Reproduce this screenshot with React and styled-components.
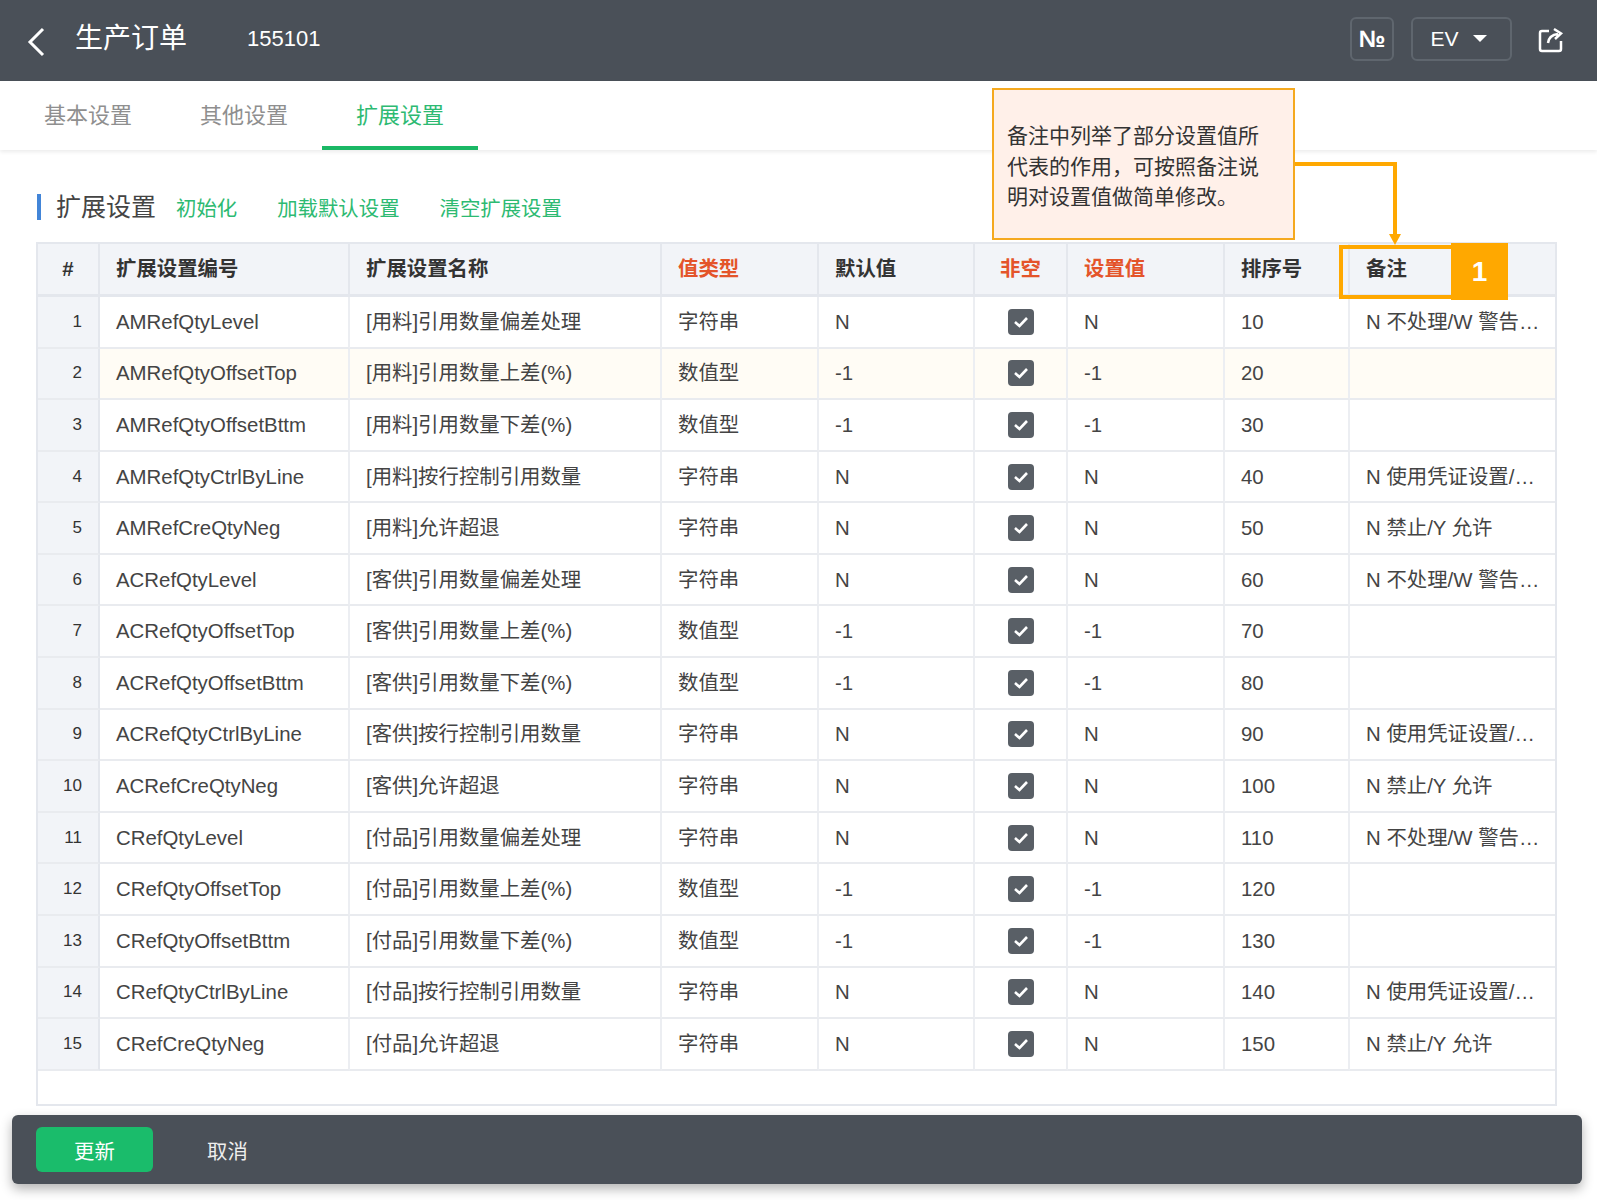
import styled, { createGlobalStyle } from 'styled-components'

const GlobalStyle = createGlobalStyle`
    html, body {
        margin: 0;
        padding: 0;
        background: #fff;
    }
    body {
        font-family: "Liberation Sans", "Noto Sans CJK SC", sans-serif;
        color: #333;
    }
`

const Page = styled.div`
    position: relative;
    width: 1597px;
    height: 1200px;
    overflow: hidden;
`

const Header = styled.header`
    display: flex;
    align-items: center;
    height: 81px;
    padding: 0 33px 0 25px;
    background: #4a5058;
    color: #fff;
    box-sizing: border-box;
`

const BackIcon = styled.svg`
    width: 22px;
    height: 32px;
    margin-top: 3px;
    margin-right: 28px;
`

const Title = styled.h1`
    margin: 0 60px 3px 0;
    font-size: 28px;
    font-weight: 400;
    line-height: 36px;
`

const OrderNo = styled.span`
    margin-bottom: 3px;
    font-size: 22px;
`

const HeaderRight = styled.div`
    display: flex;
    align-items: center;
    margin-left: auto;
    margin-bottom: 4px;
`

const HeaderBox = styled.div`
    display: flex;
    align-items: center;
    justify-content: center;
    gap: 14px;
    width: ${props => props.$w}px;
    height: 44px;
    margin-right: ${props => props.$mr}px;
    padding-right: ${props => props.$pr || 0}px;
    border: 2px solid #5f666e;
    border-radius: 6px;
    box-sizing: border-box;
    font-size: ${props => props.$size}px;
    font-weight: ${props => props.$bold ? 700 : 400};
`

const Caret = styled.span`
    width: 0;
    height: 0;
    border-left: 7px solid transparent;
    border-right: 7px solid transparent;
    border-top: 7px solid #fff;
`

const ShareIcon = styled.svg`
    margin-top: 2px;
`

const Tabs = styled.nav`
    display: flex;
    height: 69px;
    padding-left: 10px;
    box-shadow: 0 2px 4px rgba(0, 0, 0, 0.08);
    box-sizing: border-box;
`

const Tab = styled.div`
    width: 156px;
    padding-top: 20px;
    box-sizing: border-box;
    text-align: center;
    font-size: 22px;
    line-height: 30px;
    color: ${props => props.$active ? '#2dba72' : '#8f8f8f'};
    border-bottom: 4px solid ${props => props.$active ? '#1ab865' : 'transparent'};
`

const Content = styled.main`
    padding: 44px 40px 0 36px;
`

const SectionHead = styled.div`
    display: flex;
    align-items: center;
    height: 26px;
    margin-bottom: 22px;
    padding-left: 1px;
`

const SectionTitle = styled.h2`
    margin: 0 20px 0 0;
    padding-left: 15px;
    border-left: 4px solid #4285d8;
    font-size: 25px;
    font-weight: 400;
    line-height: 26px;
    color: #444;
`

const HeadLink = styled.a`
    margin-right: 40px;
    font-size: 20.4px;
    color: #2dba72;
`

const TableBox = styled.div`
    height: 864px;
    border: 2px solid #e4e7ed;
    box-sizing: border-box;
`

const Table = styled.table`
    width: 100%;
    table-layout: fixed;
    border-collapse: separate;
    border-spacing: 0;
`

const Th = styled.th`
    height: 53px;
    padding: 0 16px;
    box-sizing: border-box;
    background: #f2f4f8;
    border-right: 2px solid #e4e7ed;
    border-bottom: 3px solid #e4e7ed;
    text-align: ${props => props.$center ? 'center' : 'left'};
    font-size: 20.4px;
    font-weight: 700;
    line-height: 24px;
    color: ${props => props.$req ? '#e4542a' : '#333'};

    &:last-child {
        border-right: 0;
    }
`

const Tr = styled.tr`
    background: ${props => props.$hot ? '#fffcf5' : '#fff'};
`

const Td = styled.td`
    height: 51.58px;
    padding: 0 16px;
    box-sizing: border-box;
    border-right: 2px solid #eceef2;
    border-bottom: 2px solid #e9ebef;
    font-size: 20.4px;
    line-height: 24px;
    color: #444;
    white-space: nowrap;

    &:last-child {
        border-right: 0;
    }
`

const IndexTd = styled(Td)`
    padding: 0 16px 0 0;
    background: #f2f4f8;
    border-right: 2px solid #e4e7ed;
    text-align: right;
    font-size: 17px;
    color: #333;
`

const CheckTd = styled(Td)`
    padding: 0;
    text-align: center;
    line-height: 0;
`

const Check = styled.span`
    display: inline-flex;
    align-items: center;
    justify-content: center;
    width: 26px;
    height: 26px;
    border-radius: 4px;
    background: #595f66;
`

const Footer = styled.footer`
    display: flex;
    align-items: center;
    height: 69px;
    margin: 9px 15px 0 12px;
    padding-left: 24px;
    background: #4a5058;
    border-radius: 6px;
    box-shadow: 0 5px 12px rgba(0, 0, 0, 0.3);
`

const SaveButton = styled.button`
    width: 117px;
    height: 45px;
    border: 0;
    border-radius: 6px;
    background: #1abc6b;
    color: #fff;
    font-family: inherit;
    font-size: 20.4px;
`

const CancelButton = styled.button`
    margin-left: 54px;
    padding: 0;
    border: 0;
    background: none;
    color: #eee;
    font-family: inherit;
    font-size: 20.4px;
`

const Callout = styled.div`
    position: absolute;
    left: 992px;
    top: 88px;
    width: 303px;
    height: 152px;
    padding: 31px 0 0 13px;
    box-sizing: border-box;
    background: #fff0e9;
    border: 2px solid #f5a91f;
    font-size: 21px;
    line-height: 30.5px;
    color: #333;
`

const Arrow = styled.svg`
    position: absolute;
    left: 1295px;
    top: 159px;
`

const Highlight = styled.div`
    position: absolute;
    left: 1339px;
    top: 245px;
    width: 114px;
    height: 54px;
    box-sizing: border-box;
    border: 4px solid #ffa800;
    border-right: 0;
`

const Badge = styled.div`
    position: absolute;
    left: 1451px;
    top: 243px;
    width: 57px;
    height: 57px;
    display: flex;
    align-items: center;
    justify-content: center;
    background: #ffa800;
    color: #fff;
    font-size: 28px;
    font-weight: 700;
`

const columns = [
    { label: '#', w: 62, center: true },
    { label: '扩展设置编号', w: 250 },
    { label: '扩展设置名称', w: 312 },
    { label: '值类型', w: 157, req: true },
    { label: '默认值', w: 156 },
    { label: '非空', w: 93, req: true, center: true },
    { label: '设置值', w: 157, req: true },
    { label: '排序号', w: 125 },
    { label: '备注' },
]

const groups = [
    { code: 'AM', tag: '用料' },
    { code: 'AC', tag: '客供' },
    { code: 'C', tag: '付品' },
]

const kinds = [
    { code: 'RefQtyLevel', name: '引用数量偏差处理', type: '字符串', val: 'N', note: 'N 不处理/W 警告…' },
    { code: 'RefQtyOffsetTop', name: '引用数量上差(%)', type: '数值型', val: '-1', note: '' },
    { code: 'RefQtyOffsetBttm', name: '引用数量下差(%)', type: '数值型', val: '-1', note: '' },
    { code: 'RefQtyCtrlByLine', name: '按行控制引用数量', type: '字符串', val: 'N', note: 'N 使用凭证设置/…' },
    { code: 'RefCreQtyNeg', name: '允许超退', type: '字符串', val: 'N', note: 'N 禁止/Y 允许' },
]

const rows = groups.flatMap(g => kinds.map(k => ({ ...k, code: g.code + k.code, name: `[${g.tag}]${k.name}` })))

function App() {
    return (
        <Page>
            <GlobalStyle />
            <Header>
                <BackIcon viewBox="0 0 22 32" fill="none" stroke="#fff" strokeWidth="3">
                    <path d="M18 3 L5 16 L18 29" />
                </BackIcon>
                <Title>生产订单</Title>
                <OrderNo>155101</OrderNo>
                <HeaderRight>
                    <HeaderBox $w={44} $mr={17} $size={24} $bold>№</HeaderBox>
                    <HeaderBox $w={101} $mr={26} $size={21} $pr={6}>EV<Caret /></HeaderBox>
                    <ShareIcon width="26" height="26" viewBox="0 0 26 26" fill="none" stroke="#fff" strokeWidth="2.5">
                        <path d="M11 4 H4 Q2 4 2 6 V22 Q2 24 4 24 H21 Q23 24 23 22 V14" />
                        <path d="M10 16 Q11 8 20 7 M16 2 L23 6.5 L17 12" />
                    </ShareIcon>
                </HeaderRight>
            </Header>
            <Tabs>
                <Tab>基本设置</Tab>
                <Tab>其他设置</Tab>
                <Tab $active>扩展设置</Tab>
            </Tabs>
            <Content>
                <SectionHead>
                    <SectionTitle>扩展设置</SectionTitle>
                    <HeadLink>初始化</HeadLink>
                    <HeadLink>加载默认设置</HeadLink>
                    <HeadLink>清空扩展设置</HeadLink>
                </SectionHead>
                <TableBox>
                    <Table>
                        <colgroup>
                            {columns.map(c => <col key={c.label} style={{ width: c.w }} />)}
                        </colgroup>
                        <thead>
                            <tr>
                                {columns.map(c => (
                                    <Th key={c.label} $req={c.req} $center={c.center}>{c.label}</Th>
                                ))}
                            </tr>
                        </thead>
                        <tbody>
                            {rows.map((r, i) => (
                                <Tr key={r.code} $hot={i === 1}>
                                    <IndexTd>{i + 1}</IndexTd>
                                    <Td>{r.code}</Td>
                                    <Td>{r.name}</Td>
                                    <Td>{r.type}</Td>
                                    <Td>{r.val}</Td>
                                    <CheckTd>
                                        <Check>
                                            <svg width="16" height="12" viewBox="0 0 16 12" fill="none" stroke="#fff" strokeWidth="2.6">
                                                <path d="M2 6 L6.5 10 L14 2" />
                                            </svg>
                                        </Check>
                                    </CheckTd>
                                    <Td>{r.val}</Td>
                                    <Td>{(i + 1) * 10}</Td>
                                    <Td>{r.note}</Td>
                                </Tr>
                            ))}
                        </tbody>
                    </Table>
                </TableBox>
            </Content>
            <Footer>
                <SaveButton>更新</SaveButton>
                <CancelButton>取消</CancelButton>
            </Footer>
            <Callout>备注中列举了部分设置值所<br />代表的作用，可按照备注说<br />明对设置值做简单修改。</Callout>
            <Arrow width="110" height="90" viewBox="0 0 110 90" fill="none">
                <path d="M0 5 H100 V76" stroke="#ffa800" strokeWidth="4" />
                <path d="M94 75 H106 L100 86 Z" fill="#ffa800" />
            </Arrow>
            <Highlight />
            <Badge>1</Badge>
        </Page>
    )
}

export default App
